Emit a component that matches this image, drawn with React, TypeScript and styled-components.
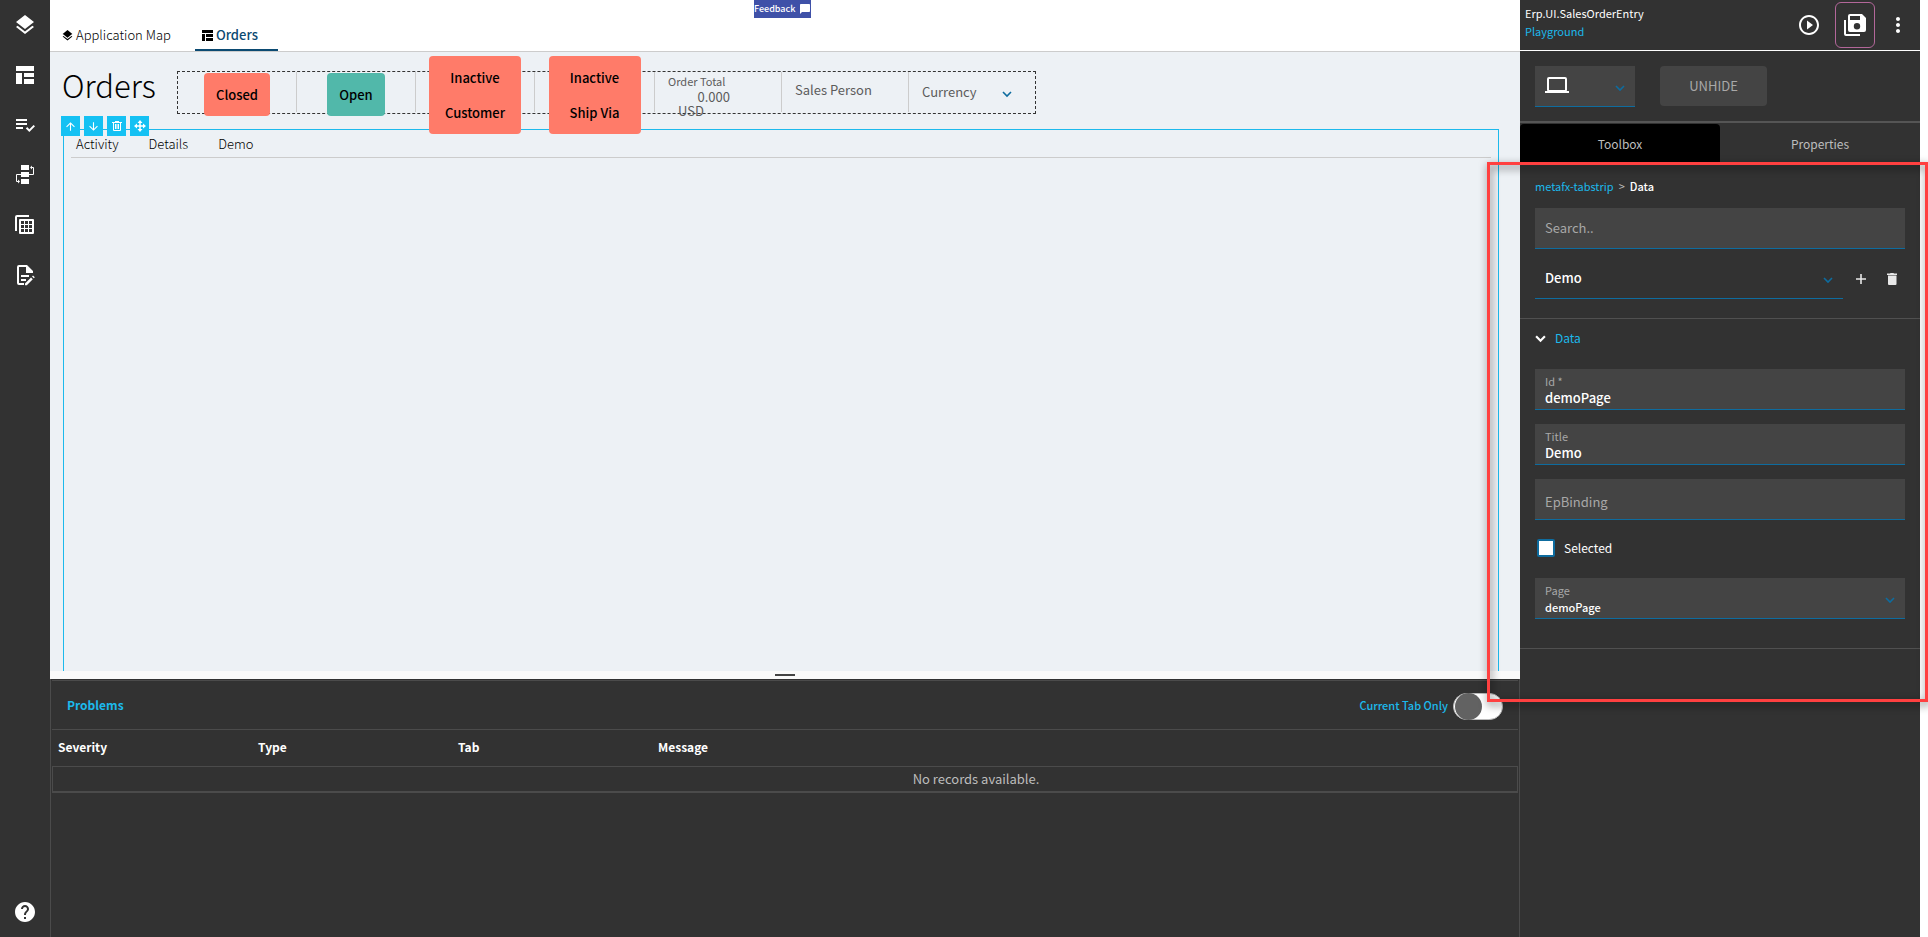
import React from "react";
import styled, { createGlobalStyle, css } from "styled-components";
import {
  MdArrowDownward,
  MdArrowUpward,
  MdChatBubble,
  MdHelp,
  MdLayers,
  MdMoreVert,
  MdPlayCircleOutline,
  MdPlaylistAddCheck,
} from "react-icons/md";

const color = {
  dark: "#323232",
  field: "#444444",
  line: "#4b4b4b",
  sky: "#1cb9ec",
  skyFill: "#15c1f3",
  navy: "#0b4a72",
  ocean: "#0e6c9f",
  canvas: "#edf1f5",
  rule: "#cccccc",
};

const Global = createGlobalStyle`
  *, *::before, *::after { box-sizing: border-box; }
  body { margin: 0; background: #fff; }
  body, button, input, select {
    font-family: "Noto Sans CJK SC", "Noto Sans", sans-serif;
    font-size: 13px;
    line-height: 18px;
  }
  button, input, select { margin: 0; padding: 0; border: 0; background: none; color: inherit; border-radius: 0; }
  button { cursor: pointer; }
  a { text-decoration: none; }
`;

/* ---------- icons ---------- */

const LayoutIcon = ({ size = 24 }: { size?: number }) => (
  <svg width={size} height={size} viewBox="0 0 24 24" fill="currentColor" aria-hidden="true">
    <path d="M3 3h18v5H3zM3 10h6v11H3zM11 10h10v4H11zM11 16h10v5H11z" />
  </svg>
);

const SmallLayoutIcon = () => (
  <svg width="11" height="11" viewBox="0 0 11 11" fill="currentColor" aria-hidden="true">
    <path d="M0 0h11v3H0zM0 4h3v7H0zM4 4h7v3H4zM4 8h7v3H4z" />
  </svg>
);

const FlowIcon = () => (
  <svg width="24" height="24" viewBox="0 0 24 24" fill="currentColor" aria-hidden="true">
    <path d="M8 2h8v5H8zM8 9h8v5H8zM8 16h8v5H8z" />
    <path d="M18 4.500h2.500v7H16M8 11.500H3.500v7H6" fill="none" stroke="currentColor" />
    <path d="M19 2.500v4l-2-2zM5 16.500v4l2-2z" />
  </svg>
);

const SheetsIcon = () => (
  <svg width="24" height="24" viewBox="0 0 24 24" fill="currentColor" aria-hidden="true">
    <path d="M16 2H4a2 2 0 0 0-2 2v14h2V4h12z" />
    <path
      fillRule="evenodd"
      d="M7 6h13a1 1 0 0 1 1 1v13a1 1 0 0 1-1 1H7a1 1 0 0 1-1-1V7a1 1 0 0 1 1-1zM8 8v3h3V8zm4 0v3h3V8zm4 0v3h3V8zM8 12v3h3v-3zm4 0v3h3v-3zm4 0v3h3v-3zM8 16v3h3v-3zm4 0v3h3v-3zm4 0v3h3v-3z"
    />
  </svg>
);

const DocEditIcon = () => (
  <svg width="24" height="24" viewBox="0 0 24 24" fill="currentColor" aria-hidden="true">
    <path d="M6 2h8l6 6v2h-7V4H6v16h5v2H6a2 2 0 0 1-2-2V4a2 2 0 0 1 2-2z" />
    <path d="M8 12h8v2H8zM8 16h5v2H8z" />
    <path d="M12 20.500l6-6 1.800 1.800-6 6H12zM19 13.500l1-1 1.800 1.800-1 1z" />
  </svg>
);

const TrashOutlineIcon = () => (
  <svg width="12" height="12" viewBox="0 0 12 12" fill="none" stroke="currentColor" aria-hidden="true">
    <path d="M1 2.500h10M4 1.500h4M2.500 3v7.500h7V3M4.500 4v5M6 4v5M7.500 4v5" />
  </svg>
);

const MoveIcon = () => (
  <svg width="12" height="12" viewBox="0 0 12 12" aria-hidden="true">
    <path d="M6 2v8M2 6h8" stroke="currentColor" strokeWidth="1.500" />
    <path d="M6 0l2.500 3h-5zM6 12l2.500-3h-5zM0 6l3-2.500v5zM12 6L9 3.500v5z" fill="currentColor" />
  </svg>
);

const Chevron = ({ size = 10, weight = 1.6 }: { size?: number; weight?: number }) => (
  <svg width={size} height={size} viewBox="0 0 10 10" fill="none" stroke="currentColor" strokeWidth={weight} aria-hidden="true">
    <path d="M1 3l4 4 4-4" />
  </svg>
);

const LaptopIcon = () => (
  <svg width="24" height="18" viewBox="0 0 24 18" aria-hidden="true">
    <rect x="3" y="1" width="18" height="13" rx="1" fill="none" stroke="currentColor" strokeWidth="2" />
    <path d="M0 14h24v2H0z" fill="currentColor" />
  </svg>
);

const SaveAllIcon = () => (
  <svg width="24" height="24" viewBox="0 0 24 24" fill="currentColor" aria-hidden="true">
    <path
      fillRule="evenodd"
      d="M7 1h12l4 4v12a2 2 0 0 1-2 2H7a2 2 0 0 1-2-2V3a2 2 0 0 1 2-2zM7 3v4h10V3zM14 10a3.200 3.200 0 1 0 0 6.400 3.200 3.200 0 0 0 0-6.400z"
    />
    <path d="M1 7h2v14h14v2H3a2 2 0 0 1-2-2z" />
  </svg>
);

const PlusIcon = () => (
  <svg width="12" height="12" viewBox="0 0 12 12" stroke="currentColor" strokeWidth="1.600" aria-hidden="true">
    <path d="M6 1v10M1 6h10" />
  </svg>
);

const TrashIcon = () => (
  <svg width="12" height="14" viewBox="0 0 12 14" fill="currentColor" aria-hidden="true">
    <path d="M1 1.500h3l.5-.5h3l.5.5h3V3H1zM2 3.500h8.500V12a1 1 0 0 1-1 1H3a1 1 0 0 1-1-1z" />
  </svg>
);

/* ---------- page frame ---------- */

const Page = styled.div`
  display: grid;
  grid-template-columns: 50px minmax(0, 1fr) 400px;
  min-height: 100vh;
  padding-right: 8px;
`;

const Rail = styled.nav`
  display: flex;
  flex-direction: column;
  background: ${color.dark};
  color: #fff;
`;

const RailButton = styled.button<{ $last?: boolean }>`
  display: grid;
  place-items: center;
  height: 50px;
  ${(p) => p.$last && css`margin-top: auto;`}
`;

const Workspace = styled.main`
  display: flex;
  flex-direction: column;
`;

/* ---------- document header ---------- */

const Header = styled.header`
  display: flex;
  flex-direction: column;
  height: 52px;
  border-bottom: 1px solid ${color.rule};
`;

const Feedback = styled.button`
  display: flex;
  align-items: center;
  align-self: center;
  justify-content: space-between;
  width: 57px;
  height: 18px;
  margin-right: 5px;
  background: #3f51a8;
  color: #fff;
  font-size: 9px;
  font-weight: 500;
`;

const DocTabs = styled.div`
  display: flex;
  flex: 1;
  gap: 24px;
`;

const DocTab = styled.button<{ $active?: boolean }>`
  display: flex;
  align-items: center;
  gap: 2px;
  padding: 2px 0 0 11px;
  border-bottom: 2px solid transparent;
  color: #000;
  font-weight: 300;
  ${(p) =>
    p.$active &&
    css`
      gap: 3px;
      padding: 2px 20px 0 7px;
      border-bottom-color: ${color.navy};
      color: ${color.navy};
      font-weight: 500;
    `}
  svg { margin-top: 1px; color: #000; }
`;

/* ---------- canvas ---------- */

const Canvas = styled.section`
  display: flex;
  flex: 1;
  flex-direction: column;
  padding: 19px 21px 0 12px;
  background: ${color.canvas};
`;

const TitleRow = styled.div`
  display: flex;
  align-items: center;
  height: 43px;
  gap: 20px;
`;

const Title = styled.h1`
  width: 95px;
  margin: 0 0 16px;
  color: #000;
  font-size: 31px;
  font-weight: 300;
  line-height: 30px;
`;

const Summary = styled.div`
  display: grid;
  grid-template-columns: repeat(3, 119px) 120px 127px 127px 126px;
  height: 43px;
  border: 1px dashed #333;
`;

const Cell = styled.div`
  position: relative;
  display: flex;
  align-items: center;
  height: 40px;
  color: #5c5c5c;
  border-right: 1px solid ${color.rule};
  &:last-child { border-right: 0; }
`;

const ChipCell = styled(Cell)`
  justify-content: center;
  padding-top: 5px;
`;

const Chip = styled.span<{ $open?: boolean; $wide?: boolean }>`
  z-index: 1;
  flex: none;
  width: ${(p) => (p.$wide ? "92px" : "auto")};
  padding: 4px 12px;
  border-radius: 4px;
  background: ${(p) => (p.$open ? "#51b8aa" : "#ff7b69")};
  color: #000;
  font-weight: 500;
  line-height: 35px;
  text-align: center;
`;

const TotalCell = styled(Cell)`
  flex-direction: column;
  align-items: flex-start;
  padding: 2px 51px 0 13px;
  line-height: 14px;
`;

const SmallLabel = styled.span`
  font-size: 11px;
`;

const Amount = styled.output`
  align-self: flex-end;
  padding-top: 2px;
`;

const Unit = styled.span`
  padding-left: 10px;
`;

const InlineInput = styled.input`
  width: 100%;
  padding: 0 13px 4px;
  outline: none;
  &::placeholder { color: #5c5c5c; opacity: 1; }
`;

const InlineSelect = styled.select`
  width: 100%;
  height: 40px;
  padding: 0 13px;
  appearance: none;
`;

const ChevronMark = styled.span<{ $right: number }>`
  position: absolute;
  right: ${(p) => p.$right}px;
  bottom: 13px;
  display: flex;
  color: ${color.ocean};
  pointer-events: none;
`;

const Selection = styled.div`
  position: relative;
  flex: 1;
  min-height: 360px;
  margin: 15px 0 0 1px;
  padding: 0 7px;
  border: 1px solid ${color.sky};
  border-bottom: 0;
`;

const SelectionTools = styled.div`
  position: absolute;
  top: -14px;
  left: -3px;
  display: flex;
  gap: 4px;
`;

const ToolButton = styled.button`
  display: grid;
  place-items: center;
  width: 19px;
  height: 20px;
  background: ${color.skyFill};
  color: #fff;
`;

const StripTabs = styled.div`
  display: flex;
  gap: 30px;
  height: 28px;
  padding: 0 5px;
  border-bottom: 1px solid ${color.rule};
`;

const StripTab = styled.button`
  color: #000;
  font-weight: 300;
`;

const Splitter = styled.div`
  display: flex;
  justify-content: center;
  height: 8px;
  padding-top: 3px;
  background: #fafafa;
  &::before { content: ""; width: 20px; height: 2px; background: #444; }
`;

/* ---------- problems ---------- */

const Problems = styled.section`
  height: 258px;
  padding: 1px;
  border: 1px solid ${color.line};
  border-width: 0 1px;
  background: ${color.dark};
  color: #fff;
`;

const ProblemsBar = styled.div`
  display: flex;
  align-items: center;
  justify-content: space-between;
  height: 50px;
  padding: 2px 15px 0;
  border: 1px solid ${color.line};
  border-width: 1px 0;
  color: ${color.sky};
  font-weight: 500;
`;

const ProblemsTitle = styled.h2`
  margin: 0 0 2px;
  font-size: 12px;
  font-weight: 700;
`;

const SwitchLabel = styled.label`
  display: flex;
  align-items: center;
  gap: 5px;
  font-size: 11px;
  span { padding-bottom: 3px; }
`;

const Switch = styled.input`
  display: flex;
  align-items: center;
  width: 50px;
  height: 27px;
  padding: 0 1px;
  border: 1px solid #bbb;
  border-radius: 14px;
  background: #fff;
  appearance: none;
  &::before {
    content: "";
    width: 27px;
    height: 27px;
    border-radius: 50%;
    background: #626262;
  }
`;

const Grid = styled.table`
  width: 100%;
  table-layout: fixed;
  border-collapse: separate;
  border-spacing: 0;
  th {
    width: 200px;
    height: 36px;
    padding: 0 6px 2px;
    font-size: 12px;
    font-weight: 700;
    text-align: left;
  }
  th:last-child { width: auto; }
  td {
    height: 27px;
    padding: 0 0 0 382px;
    border: 1px solid ${color.line};
    border-bottom-width: 2px;
    color: #bdbdbd;
    text-align: center;
  }
`;

/* ---------- inspector ---------- */

const Inspector = styled.aside`
  position: relative;
  background: ${color.dark};
  color: #fff;
`;

const AppBar = styled.div`
  display: flex;
  align-items: center;
  height: 51px;
  padding: 0 10px 0 5px;
  border-bottom: 1px solid #fff;
`;

const AppName = styled.div`
  display: flex;
  flex: 1;
  flex-direction: column;
  padding-bottom: 6px;
  font-size: 11px;
  a { color: ${color.sky}; }
`;

const AppButton = styled.button<{ $framed?: boolean }>`
  display: grid;
  place-items: center;
  width: 24px;
  height: 46px;
  ${(p) =>
    p.$framed &&
    css`
      width: 40px;
      margin: 0 11px 0 14px;
      border: 1px solid #b3679a;
      border-radius: 6px;
    `}
`;

const DeviceRow = styled.div`
  display: flex;
  gap: 25px;
  padding: 15px 15px 14px;
  border-bottom: 2px solid #555;
`;

const DevicePicker = styled.div`
  position: relative;
  width: 100px;
  border-bottom: 1px solid ${color.ocean};
  background: ${color.field};
`;

const DeviceSelect = styled.select`
  width: 100%;
  height: 40px;
  appearance: none;
`;

const DeviceGlyph = styled.span`
  position: absolute;
  top: 11px;
  left: 10px;
  display: flex;
  pointer-events: none;
`;

const Unhide = styled.button`
  width: 107px;
  height: 40px;
  border-radius: 4px;
  background: ${color.field};
  color: #a8a8a8;
`;

const PanelTabs = styled.div`
  display: grid;
  grid-template-columns: 1fr 1fr;
  padding-top: 1px;
`;

const PanelTab = styled.button<{ $active?: boolean }>`
  height: 39px;
  border-radius: 4px 4px 0 0;
  background: ${(p) => (p.$active ? "#000" : "none")};
  color: #bdbdbd;
  font-size: 12px;
`;

const Section = styled.section`
  display: flex;
  flex-direction: column;
  padding: 0 15px;
  border-bottom: 1px solid #505050;
`;

const Crumbs = styled.nav`
  display: flex;
  gap: 5px;
  padding: 14px 0 13px;
  color: #bdbdbd;
  font-size: 11px;
  a { color: ${color.sky}; }
  strong { color: #fff; font-weight: 500; }
`;

const SearchBox = styled.input`
  width: 100%;
  height: 41px;
  padding: 0 10px 2px;
  border-bottom: 1px solid ${color.ocean};
  background: ${color.field};
  &::placeholder { color: #a8a8a8; opacity: 1; }
`;

const PageRow = styled.div`
  display: flex;
  align-items: center;
  padding: 9px 0 19px;
`;

const PagePicker = styled.div`
  position: relative;
  flex: 1;
  margin-right: 6px;
  border-bottom: 1px solid ${color.ocean};
`;

const PageSelect = styled.select`
  width: 100%;
  height: 40px;
  padding: 0 10px;
  font-weight: 500;
  appearance: none;
`;

const IconButton = styled.button`
  display: grid;
  place-items: center;
  width: 24px;
  height: 24px;
  margin-right: 1px;
  color: #e8e8e8;
  & + & { margin: 0 1px 0 6px; }
`;

const Disclosure = styled.button`
  display: flex;
  align-items: center;
  gap: 9px;
  padding: 10px 0 22px;
  color: ${color.sky};
  font-size: 12px;
  svg { color: #fff; }
`;

const Fields = styled.div`
  display: flex;
  flex-direction: column;
  gap: 14px;
  padding-bottom: 29px;
`;

const Field = styled.div`
  position: relative;
  display: flex;
  flex-direction: column;
  height: 41px;
  padding: 4px 10px 0;
  border-bottom: 1px solid ${color.ocean};
  background: ${color.field};
  label { color: #a8a8a8; font-size: 11px; line-height: 16px; }
  input, select { height: 18px; font-weight: 500; appearance: none; outline: none; }
  select { font-size: 11px; }
`;

const EmptyField = styled(SearchBox)`
  padding-top: 6px;
`;

const CheckRow = styled.label`
  display: flex;
  align-items: center;
  gap: 9px;
  padding: 5px 0 7px 2px;
  font-size: 12px;
`;

const CheckBox = styled.input`
  width: 18px;
  height: 18px;
  border: 2px solid ${color.ocean};
  border-radius: 2px;
  background: #fff;
  appearance: none;
`;

const Highlight = styled.div`
  position: absolute;
  top: 162px;
  right: -8px;
  left: -33px;
  height: 540px;
  border: 3px solid #ff4040;
  filter: drop-shadow(1px 3px 4px rgba(0, 0, 0, 0.6));
  pointer-events: none;
`;

const railItems = [
  { name: "Layers", icon: <MdLayers size={24} /> },
  { name: "Layout", icon: <LayoutIcon /> },
  { name: "Rules", icon: <MdPlaylistAddCheck size={24} /> },
  { name: "Events", icon: <FlowIcon /> },
  { name: "Data views", icon: <SheetsIcon /> },
  { name: "Edit document", icon: <DocEditIcon /> },
];

const tools = [
  { name: "Move up", icon: <MdArrowUpward size={13} /> },
  { name: "Move down", icon: <MdArrowDownward size={13} /> },
  { name: "Delete", icon: <TrashOutlineIcon /> },
  { name: "Drag", icon: <MoveIcon /> },
];

export default function App() {
  return (
    <>
      <Global />
      <Page>
        <Rail>
          {railItems.map((item) => (
            <RailButton key={item.name} aria-label={item.name}>{item.icon}</RailButton>
          ))}
          <RailButton $last aria-label="Help"><MdHelp size={24} /></RailButton>
        </Rail>

        <Workspace>
          <Header>
            <Feedback>Feedback <MdChatBubble size={12} /></Feedback>
            <DocTabs>
              <DocTab><MdLayers size={13} />Application Map</DocTab>
              <DocTab $active><SmallLayoutIcon />Orders</DocTab>
            </DocTabs>
          </Header>

          <Canvas>
            <TitleRow>
              <Title>Orders</Title>
              <Summary>
                <ChipCell><Chip>Closed</Chip></ChipCell>
                <ChipCell><Chip $open>Open</Chip></ChipCell>
                <ChipCell><Chip $wide>Inactive Customer</Chip></ChipCell>
                <ChipCell><Chip $wide>Inactive<br />Ship Via</Chip></ChipCell>
                <TotalCell>
                  <SmallLabel>Order Total</SmallLabel>
                  <Amount>0.000</Amount>
                  <Unit>USD</Unit>
                </TotalCell>
                <Cell><InlineInput aria-label="Sales Person" placeholder="Sales Person" /></Cell>
                <Cell>
                  <InlineSelect aria-label="Currency"><option>Currency</option></InlineSelect>
                  <ChevronMark $right={23}><Chevron /></ChevronMark>
                </Cell>
              </Summary>
            </TitleRow>
            <Selection>
              <SelectionTools>
                {tools.map((t) => <ToolButton key={t.name} aria-label={t.name}>{t.icon}</ToolButton>)}
              </SelectionTools>
              <StripTabs>
                <StripTab>Activity</StripTab>
                <StripTab>Details</StripTab>
                <StripTab>Demo</StripTab>
              </StripTabs>
            </Selection>
          </Canvas>
          <Splitter />

          <Problems>
            <ProblemsBar>
              <ProblemsTitle>Problems</ProblemsTitle>
              <SwitchLabel><span>Current Tab Only</span><Switch type="checkbox" role="switch" /></SwitchLabel>
            </ProblemsBar>
            <Grid>
              <thead>
                <tr><th>Severity</th><th>Type</th><th>Tab</th><th>Message</th></tr>
              </thead>
              <tbody>
                <tr><td colSpan={4}>No records available.</td></tr>
              </tbody>
            </Grid>
          </Problems>
        </Workspace>

        <Inspector>
          <AppBar>
            <AppName>
              <span>Erp.UI.SalesOrderEntry</span>
              <a href="#playground">Playground</a>
            </AppName>
            <AppButton aria-label="Preview"><MdPlayCircleOutline size={24} /></AppButton>
            <AppButton $framed aria-label="Save"><SaveAllIcon /></AppButton>
            <AppButton aria-label="More"><MdMoreVert size={24} /></AppButton>
          </AppBar>
          <DeviceRow>
            <DevicePicker>
              <DeviceSelect aria-label="Device"><option aria-label="Laptop" /></DeviceSelect>
              <DeviceGlyph><LaptopIcon /></DeviceGlyph>
              <ChevronMark $right={10}><Chevron /></ChevronMark>
            </DevicePicker>
            <Unhide>UNHIDE</Unhide>
          </DeviceRow>
          <PanelTabs>
            <PanelTab $active>Toolbox</PanelTab>
            <PanelTab>Properties</PanelTab>
          </PanelTabs>

          <Section>
            <Crumbs>
              <a href="#tabstrip">metafx-tabstrip</a><span>&gt;</span><strong>Data</strong>
            </Crumbs>
            <SearchBox aria-label="Search" placeholder="Search.." />
            <PageRow>
              <PagePicker>
                <PageSelect aria-label="Tab page"><option>Demo</option></PageSelect>
                <ChevronMark $right={10}><Chevron /></ChevronMark>
              </PagePicker>
              <IconButton aria-label="Add"><PlusIcon /></IconButton>
              <IconButton aria-label="Remove"><TrashIcon /></IconButton>
            </PageRow>
          </Section>

          <Section>
            <Disclosure aria-expanded="true"><Chevron size={11} weight={2} />Data</Disclosure>
            <Fields>
              <Field>
                <label htmlFor="f-id">Id *</label>
                <input id="f-id" defaultValue="demoPage" />
              </Field>
              <Field>
                <label htmlFor="f-title">Title</label>
                <input id="f-title" defaultValue="Demo" />
              </Field>
              <EmptyField aria-label="EpBinding" placeholder="EpBinding" />
              <CheckRow><CheckBox type="checkbox" />Selected</CheckRow>
              <Field>
                <label htmlFor="f-page">Page</label>
                <select id="f-page"><option>demoPage</option></select>
                <ChevronMark $right={10}><Chevron /></ChevronMark>
              </Field>
            </Fields>
          </Section>
          <Highlight />
        </Inspector>
      </Page>
    </>
  );
}
